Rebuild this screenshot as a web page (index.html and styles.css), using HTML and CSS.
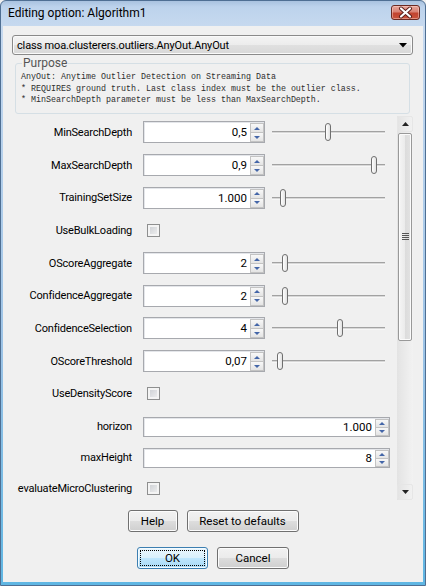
FILE: index.html
```html
<!DOCTYPE html>
<html>
<head>
<meta charset="utf-8">
<title>Editing option: Algorithm1</title>
<link rel="stylesheet" href="styles.css">
</head>
<body>
<div class="window">
  <div class="titlebar">
    <div class="title">Editing option: Algorithm1</div>
    <div class="close">
      <svg width="27" height="13" viewBox="0 0 27 13">
        <path d="M9 2.5 L18 10.5 M18 2.5 L9 10.5" stroke="#5a1e1a" stroke-width="4" stroke-linecap="round"/>
        <path d="M9 2.5 L18 10.5 M18 2.5 L9 10.5" stroke="#ffffff" stroke-width="2.2" stroke-linecap="round"/>
      </svg>
    </div>
  </div>
  <div class="client">
    <div class="combo">
      <span class="combo-text">class moa.clusterers.outliers.AnyOut.AnyOut</span>
      <svg class="combo-arrow" width="8" height="5" viewBox="0 0 8 5"><path d="M0 0 H8 L4 4.5 Z" fill="#000"/></svg>
    </div>
    <fieldset class="purpose">
      <legend>Purpose</legend>
      <pre class="purpose-text">AnyOut: Anytime Outlier Detection on Streaming Data
* REQUIRES ground truth. Last class index must be the outlier class.
* MinSearchDepth parameter must be less than MaxSearchDepth.</pre>
    </fieldset>
    <div class="scroller">
      <div class="rows">
        <div class="row">
          <div class="label">MinSearchDepth</div>
          <div class="spinner"><span class="value">0,5</span><span class="spin"><span class="spin-up"></span><span class="spin-down"></span></span></div>
          <div class="slider"><div class="track"></div><div class="thumb" style="left:53px"></div></div>
        </div>
        <div class="row">
          <div class="label">MaxSearchDepth</div>
          <div class="spinner"><span class="value">0,9</span><span class="spin"><span class="spin-up"></span><span class="spin-down"></span></span></div>
          <div class="slider"><div class="track"></div><div class="thumb" style="left:99px"></div></div>
        </div>
        <div class="row">
          <div class="label">TrainingSetSize</div>
          <div class="spinner"><span class="value">1.000</span><span class="spin"><span class="spin-up"></span><span class="spin-down"></span></span></div>
          <div class="slider"><div class="track"></div><div class="thumb" style="left:8px"></div></div>
        </div>
        <div class="row">
          <div class="label">UseBulkLoading</div>
          <div class="check"></div>
        </div>
        <div class="row">
          <div class="label">OScoreAggregate</div>
          <div class="spinner"><span class="value">2</span><span class="spin"><span class="spin-up"></span><span class="spin-down"></span></span></div>
          <div class="slider"><div class="track"></div><div class="thumb" style="left:10px"></div></div>
        </div>
        <div class="row">
          <div class="label">ConfidenceAggregate</div>
          <div class="spinner"><span class="value">2</span><span class="spin"><span class="spin-up"></span><span class="spin-down"></span></span></div>
          <div class="slider"><div class="track"></div><div class="thumb" style="left:10px"></div></div>
        </div>
        <div class="row">
          <div class="label">ConfidenceSelection</div>
          <div class="spinner"><span class="value">4</span><span class="spin"><span class="spin-up"></span><span class="spin-down"></span></span></div>
          <div class="slider"><div class="track"></div><div class="thumb" style="left:65px"></div></div>
        </div>
        <div class="row">
          <div class="label">OScoreThreshold</div>
          <div class="spinner"><span class="value">0,07</span><span class="spin"><span class="spin-up"></span><span class="spin-down"></span></span></div>
          <div class="slider"><div class="track"></div><div class="thumb" style="left:5px"></div></div>
        </div>
        <div class="row">
          <div class="label">UseDensityScore</div>
          <div class="check"></div>
        </div>
        <div class="row row-horizon">
          <div class="label">horizon</div>
          <div class="spinner wide"><span class="value">1.000</span><span class="spin"><span class="spin-up"></span><span class="spin-down"></span></span></div>
        </div>
        <div class="row row-height">
          <div class="label">maxHeight</div>
          <div class="spinner wide"><span class="value">8</span><span class="spin"><span class="spin-up"></span><span class="spin-down"></span></span></div>
        </div>
        <div class="row row-last">
          <div class="label">evaluateMicroClustering</div>
          <div class="check"></div>
        </div>
      </div>
      <div class="vscroll">
        <div class="sb-btn sb-up"><svg width="7" height="4" viewBox="0 0 7 4"><path d="M0 4 H7 L3.5 0 Z" fill="#222"/></svg></div>
        <div class="sb-track">
          <div class="sb-thumb">
            <svg width="7" height="8" viewBox="0 0 7 8"><path d="M0 0.5 H7 M0 2.5 H7 M0 4.5 H7 M0 6.5 H7" stroke="#555" stroke-width="1"/></svg>
          </div>
        </div>
        <div class="sb-btn sb-down"><svg width="7" height="4" viewBox="0 0 7 4"><path d="M0 0 H7 L3.5 4 Z" fill="#222"/></svg></div>
      </div>
    </div>
    <div class="btnrow">
      <button class="btn btn-help">Help</button>
      <button class="btn btn-reset">Reset to defaults</button>
    </div>
    <div class="btnrow btnrow-main">
      <button class="btn btn-default btn-ok"><span class="focus">OK</span></button>
      <button class="btn btn-cancel">Cancel</button>
    </div>
  </div>
</div>
</body>
</html>
```

FILE: styles.css
```css
* { box-sizing: border-box; }
html, body { margin: 0; padding: 0; }
body {
  width: 426px;
  height: 586px;
  overflow: hidden;
  font-family: Roboto, "Liberation Sans", sans-serif;
  font-size: 11px;
  color: #000;
  background: #f0f0f0;
}
.window {
  width: 426px;
  height: 586px;
  display: flex;
  flex-direction: column;
  border: 1px solid #4f6f93;
  border-radius: 6px 6px 0 0;
  background: linear-gradient(to bottom, #a9c2df 0px, #bdd3ec 6px, #c6d9ef 25px, #9cc3e6 60%, #5fb6e3 100%);
}
.titlebar {
  height: 25px;
  display: flex;
  align-items: flex-start;
  flex: none;
}
.title {
  margin: 4px 0 0 7px;
  font-size: 12px;
  line-height: 16px;
  color: #000;
}
.close {
  margin: 4px 5px 0 auto;
  width: 29px;
  height: 15px;
  border: 1px solid #6b2a22;
  border-radius: 3px;
  background: linear-gradient(to bottom, #e8a69b 0%, #d98274 45%, #c24430 55%, #c9533c 100%);
  box-shadow: inset 0 0 0 1px rgba(255, 220, 210, 0.45);
  display: flex;
}
.client {
  flex: 1;
  margin: 0 2px 3px 2px;
  background: #f0f0f0;
  display: flex;
  flex-direction: column;
}
.combo {
  margin: 9px 10px 0 9px;
  height: 20px;
  flex: none;
  display: flex;
  align-items: center;
  border: 1px solid #8a8a8a;
  border-radius: 3px;
  background: linear-gradient(to bottom, #f4f4f4 0%, #ececec 50%, #e0e0e0 51%, #d8d8d8 100%);
  box-shadow: inset 0 0 0 1px #fafafa;
  padding-left: 4px;
}
.combo-text {
  flex: 1;
  font-size: 11px;
  letter-spacing: -0.15px;
  white-space: nowrap;
}
.combo-arrow { margin-right: 5px; }
.purpose {
  margin: 1px 13px 0 12px;
  padding: 2px 5px 6px 5px;
  border: 1px solid #d5dfe5;
  border-radius: 3px;
  min-width: 0;
  flex: none;
}
.purpose legend {
  margin-left: 1px;
  padding: 0 1px;
  font-size: 12px;
  line-height: 14px;
  color: #555;
}
.purpose-text {
  margin: 0;
  font-family: "Liberation Mono", monospace;
  font-size: 8.33px;
  line-height: 11.5px;
  color: #2e2e2e;
  white-space: pre;
}
.scroller {
  margin: 2.5px 10px 0 0;
  height: 384px;
  flex: none;
  display: flex;
}
.rows {
  flex: 1;
  overflow: hidden;
}
.row {
  display: flex;
  align-items: center;
  height: 32.7px;
}
.row-horizon { height: 33px; }
.row-height { height: 29px; }
.row-last { height: 32px; }
.label {
  width: 129px;
  text-align: right;
  white-space: nowrap;
  letter-spacing: -0.2px;
  flex: none;
}
.spinner {
  margin-left: 11px;
  width: 122px;
  height: 22px;
  flex: none;
  display: flex;
  border: 1px solid #a7a9ae;
  background: #fff;
  box-shadow: inset 1px 1px 0 #e4e6ea;
}
.spinner.wide {
  width: 247px;
  height: 20px;
}
.value {
  flex: 1;
  text-align: right;
  padding-right: 2px;
  line-height: 20px;
  font-size: 11.5px;
}
.spinner.wide .value { line-height: 18px; }
.spin {
  margin: 1px 0 0 1px;
  width: 14px;
  display: flex;
  flex-direction: column;
}
.spin-up, .spin-down {
  display: flex;
  align-items: center;
  justify-content: center;
  border: 1px solid #c3c3c3;
  background: linear-gradient(to bottom, #f8f8f8, #e4e4e4);
}
.spin-up { height: 10px; }
.spin-down { height: 9px; border-top: none; }
.spinner.wide .spin-up { height: 9px; }
.spinner.wide .spin-down { height: 8px; }
.spin-up::after {
  content: "";
  border-left: 3px solid transparent;
  border-right: 3px solid transparent;
  border-bottom: 3px solid #4466a8;
}
.spin-down::after {
  content: "";
  border-left: 3px solid transparent;
  border-right: 3px solid transparent;
  border-top: 3px solid #4466a8;
}
.slider {
  margin-left: 7px;
  width: 113px;
  height: 22px;
  position: relative;
  flex: none;
}
.track {
  position: absolute;
  left: 0;
  right: 0;
  top: 10px;
  height: 3px;
  border-top: 1px solid #a2a2a2;
  background: #d8d8d8;
  border-bottom: 1px solid #f7f7f7;
}
.thumb {
  position: absolute;
  top: 2px;
  width: 6px;
  height: 18px;
  border: 1px solid #6f6f6f;
  border-radius: 3px;
  background: linear-gradient(to right, #ffffff, #e2e2e2);
}
.check {
  margin-left: 15px;
  width: 13px;
  height: 13px;
  flex: none;
  border: 1px solid #8e8f8f;
  background: linear-gradient(135deg, #c9ccd1, #f3f3f3);
  box-shadow: inset 0 0 0 2px #f4f4f4;
}
.vscroll {
  width: 16px;
  flex: none;
  display: flex;
  flex-direction: column;
  background: linear-gradient(to right, #e3e3e3, #f2f2f2);
}
.sb-btn {
  height: 16px;
  flex: none;
  display: flex;
  align-items: center;
  justify-content: center;
  border: 1px solid #e6e6e6;
  border-radius: 2px;
}
.sb-track {
  flex: 1;
  padding: 1px 1px 0 1px;
}
.sb-thumb {
  height: 208px;
  border: 1px solid #999;
  border-radius: 2px;
  background: linear-gradient(to right, #f5f5f5 0%, #ebebeb 50%, #dcdcdc 51%, #e2e2e2 100%);
  box-shadow: inset 0 0 0 1px #fbfbfb;
  display: flex;
  align-items: center;
  justify-content: center;
}
.btnrow {
  display: flex;
  justify-content: center;
  gap: 9px;
  margin-top: 10px;
  height: 22px;
  flex: none;
}
.btnrow-main { margin-top: 15px; }
.btn {
  height: 22px;
  padding: 0;
  font-family: Roboto, "Liberation Sans", sans-serif;
  font-size: 11.5px;
  color: #000;
  border: 1px solid #707070;
  border-radius: 3px;
  background: linear-gradient(to bottom, #f2f2f2 0%, #ebebeb 50%, #dddddd 51%, #cfcfcf 100%);
  box-shadow: inset 0 0 0 1px #fcfcfc;
  display: flex;
  align-items: center;
  justify-content: center;
}
.btn-help { width: 50px; }
.btn-reset { width: 112px; }
.btn-ok { width: 71px; }
.btn-cancel { width: 72px; }
.btn-default {
  border-color: #3c7fb1;
  background: linear-gradient(to bottom, #eaf6fd 0%, #d9f0fc 50%, #bee6fd 51%, #a7d9f5 100%);
  box-shadow: inset 0 0 0 1px #f4fbff;
  padding: 2px;
}
.focus {
  flex: 1;
  align-self: stretch;
  display: flex;
  align-items: center;
  justify-content: center;
  border: 1px dotted #000;
}
```
